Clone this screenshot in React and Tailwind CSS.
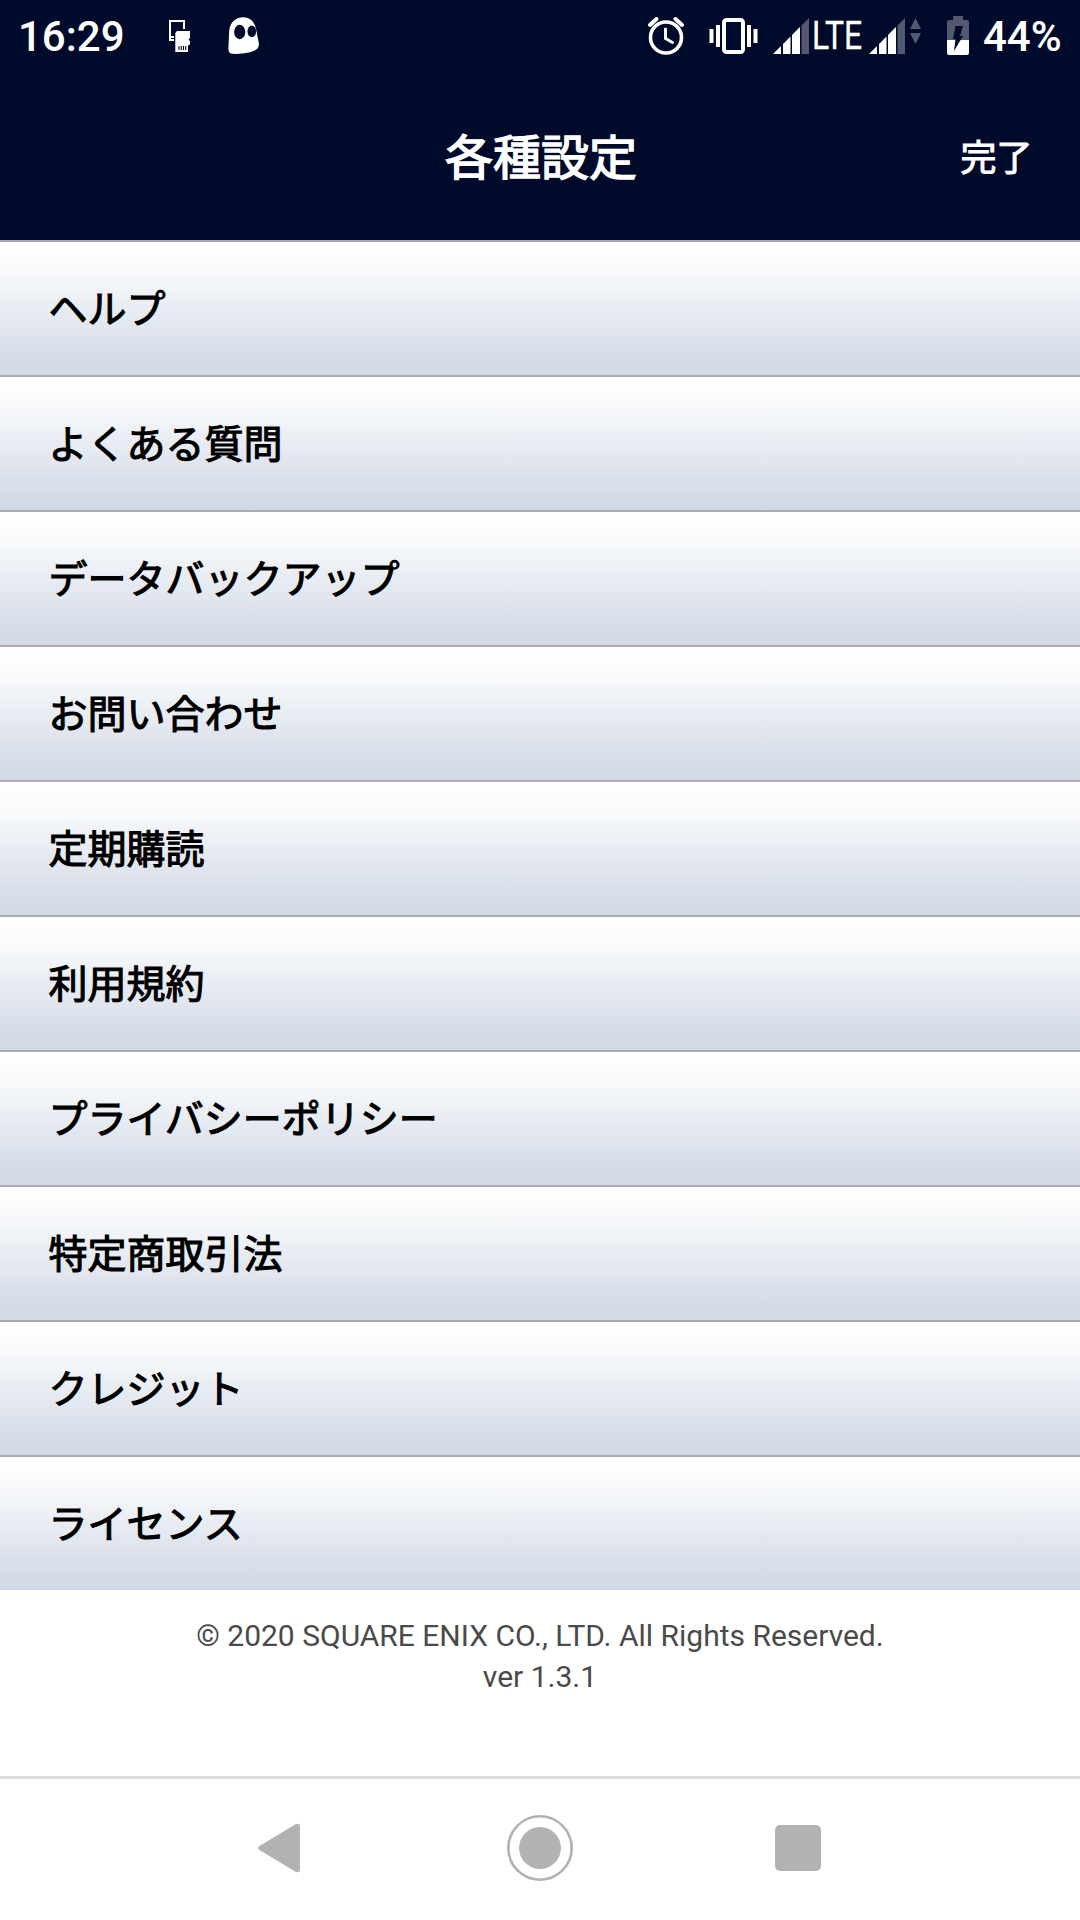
const items = [
  'ヘルプ',
  'よくある質問',
  'データバックアップ',
  'お問い合わせ',
  '定期購読',
  '利用規約',
  'プライバシーポリシー',
  '特定商取引法',
  'クレジット',
  'ライセンス',
];

function CardIcon() {
  return (
    <svg className="ml-[47px] h-8 w-[21px] shrink-0" viewBox="0 0 21 32">
      <path d="M15 9V1H1v19h4" fill="none" stroke="#fff" strokeWidth="2" />
      <path d="M2 17h3" stroke="#fff" strokeWidth="2" />
      <path d="M8 11h13v7l-1.500 1.500 1.500 1.500v3.500l-2 1V32H6.300V13z" fill="#fff" />
      <path d="M10 26v4M12.300 26v4M14.500 26v4M16.700 26v4" stroke="#000a2a" strokeWidth="1.100" />
    </svg>
  );
}

function GhostIcon() {
  return (
    <svg className="relative -top-px ml-[38px] h-[37px] w-8 shrink-0" viewBox="0 0 32 37">
      <path
        d="M4 36.800C1.300 36.600.3 34.500.4 31L1.200 14C1.800 5.500 7.500.2 15 .2c7 0 11.500 4 13 11.800l2.800 14c.6 4-1.800 6.800-5.800 8.200-6 2-14 3-21 2.600z"
        fill="#fff"
      />
      <ellipse cx="11.700" cy="15" rx="5.600" ry="7.200" fill="#000a2a" />
      <ellipse cx="23.800" cy="14.300" rx="4.300" ry="5.900" fill="#000a2a" />
    </svg>
  );
}

function AlarmIcon() {
  return (
    <svg className="h-[38px] w-9 shrink-0" viewBox="0 0 36 38" fill="none" stroke="#fff">
      <circle cx="18" cy="20.500" r="15.500" strokeWidth="3.600" />
      <path d="M2 8 8.500 2M34 8 27.500 2" strokeWidth="4" strokeLinecap="round" />
      <path d="M17.500 12v9.500l7 4" strokeWidth="3" strokeLinecap="round" />
    </svg>
  );
}

function VibrateIcon() {
  return (
    <svg className="ml-[25px] h-9 w-[49px] shrink-0" viewBox="0 0 49 36">
      <rect x="15" y="2" width="19" height="32" rx="2.500" fill="none" stroke="#fff" strokeWidth="4" />
      <path d="M.5 11h4v14h-4zM7 7h4v22H7zM38 7h4v22h-4zM44.500 11h4v14h-4z" fill="#fff" />
    </svg>
  );
}

function SignalIcon() {
  return (
    <svg className="h-9 w-9 shrink-0" viewBox="0 0 36 36">
      <path d="M0 36 8 28v8zM10 26 17.500 18.500V36H10zM19 17 27 9v27h-8z" fill="#fff" />
      <path d="M28.500 7.500 36 0v36h-7.500z" fill="#535870" />
    </svg>
  );
}

function DataArrows() {
  return (
    <svg className="ml-[5px] h-[26px] w-[11px] shrink-0" viewBox="0 0 11 26" fill="#535870">
      <path d="M5.500 0 11 11H0zM0 15h11L5.500 26z" />
    </svg>
  );
}

function BatteryIcon() {
  return (
    <svg className="relative -top-px ml-[26px] h-[39px] w-[22px] shrink-0" viewBox="0 0 22 39">
      <path d="M6 0h10v4h4q2 0 2 2v18H0V6q0-2 2-2h4z" fill="#535870" />
      <path d="M0 24h22v13q0 2-2 2H2q-2 0-2-2z" fill="#fff" />
      <path d="M8.500 10h7.500l-3 10H16L7 35l1.500-12H6z" fill="#000a2a" />
    </svg>
  );
}

function StatusBar() {
  return (
    <div className="flex h-[72px] items-center pl-[18px] pr-[19px] text-white">
      <span className="relative top-px w-[104px] shrink-0 whitespace-nowrap text-[42px] font-medium leading-none">16:29</span>
      <CardIcon />
      <GhostIcon />
      <div className="ml-auto flex items-center">
        <AlarmIcon />
        <VibrateIcon />
        <div className="ml-[15px] flex items-center">
          <SignalIcon />
          <span className="ml-[3px] w-[53px] origin-left scale-x-[0.84] whitespace-nowrap text-[38px] leading-none [-webkit-text-stroke:0.3px_white]">LTE</span>
        </div>
        <div className="ml-1 flex items-start">
          <SignalIcon />
          <DataArrows />
        </div>
        <BatteryIcon />
        <span className="relative top-px ml-[14px] w-[78px] whitespace-nowrap text-[42px] font-medium leading-none">44%</span>
      </div>
    </div>
  );
}

export default function App() {
  return (
    <div className="flex h-[1920px] w-[1080px] flex-col overflow-hidden bg-white font-['Roboto','Noto_Sans_CJK_JP',sans-serif]">
      <header className="h-60 shrink-0 bg-[#000a2a]">
        <StatusBar />
        <div className="grid h-[168px] grid-cols-[1fr_auto_1fr] items-center pl-[2px] pt-[6px] text-white">
          <h1 className="col-start-2 text-[48px] font-normal leading-none [-webkit-text-stroke:1.4px_white]">各種設定</h1>
          <button className="mr-[47.5px] justify-self-end text-[36px] font-normal leading-none [-webkit-text-stroke:1px_white]">完了</button>
        </div>
      </header>
      <ul className="shrink-0">
        {items.map((label) => (
          <li
            key={label}
            className="flex h-[135px] items-center border-t-2 border-[#ababaf] bg-[linear-gradient(180deg,#ffffff_3%,#f6f8fa_25%,#e7ebf2_52%,#d5dce8_88%,#d0dae6_100%)] pl-[48.5px] pt-[4px] text-[39px] font-normal leading-none text-black [-webkit-text-stroke:1.1px_black]"
          >
            {label}
          </li>
        ))}
      </ul>
      <footer className="flex-1 pt-[25px] text-center text-[30px] leading-[41px] text-[#4a4a4a]">
        <p>© 2020 SQUARE ENIX CO., LTD. All Rights Reserved.</p>
        <p>ver 1.3.1</p>
      </footer>
      <nav className="flex h-36 shrink-0 items-center border-t-[3px] border-[#dedede] pb-[3px] pl-[257px]">
        <svg className="h-[50px] w-11" viewBox="0 0 44 50">
          <path d="M2.500 23 38.500 1.300Q43 -.5 43 4V46Q43 50.500 38.500 48.700L2.500 27Q-.5 25 2.500 23Z" fill="#b2b2b2" />
        </svg>
        <svg className="ml-[206px] size-[66px]" viewBox="0 0 66 66">
          <circle cx="33" cy="33" r="31.700" fill="none" stroke="#b2b2b2" strokeWidth="2.600" />
          <circle cx="33" cy="33" r="21" fill="#b2b2b2" />
        </svg>
        <div className="ml-[202px] size-[46px] rounded-[5px] bg-[#b2b2b2]" />
      </nav>
    </div>
  );
}
